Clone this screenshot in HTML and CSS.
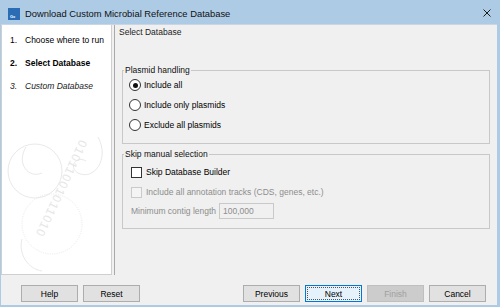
FILE: index.html
```html
<!DOCTYPE html>
<html lang="en">
<head>
    <meta charset="UTF-8">
    <meta name="viewport" content="width=device-width, initial-scale=1.0">
    <title>Download Custom Microbial Reference Database</title>
    <link rel="stylesheet" href="styles.css">
</head>
<body>
<div class="window">
    <div class="titlebar">
        <div class="appicon"><span>Gx</span></div>
        <div class="title">Download Custom Microbial Reference Database</div>
        <div class="close">
            <svg width="8" height="8" viewBox="0 0 8 8"><path d="M0.5 0.5 L7.5 7.5 M7.5 0.5 L0.5 7.5" stroke="#1b1b1b" stroke-width="1"/></svg>
        </div>
    </div>
    <div class="frame">
        <div class="main">
            <div class="side">
                <svg class="mark" width="108" height="145" viewBox="0 0 108 145">
                    <g fill="none" stroke="#e9e9e9" stroke-width="1">
                        <circle cx="33" cy="42" r="27"/>
                        <circle cx="50" cy="95" r="30" stroke-dasharray="1 1.3"/>
                        <path d="M96 8 C 108 30 92 52 76 44 C 66 38 74 26 84 32"/>
                        <path d="M24 18 C 14 34 26 50 40 44"/>
                        <path d="M20 110 C 16 125 26 140 40 142"/>
                    </g>
                    <text class="bits" transform="translate(78 10) rotate(115)">01011001011010</text>
                </svg>
                <div class="step"><span class="num">1.</span>Choose where to run</div>
                <div class="step current"><span class="num">2.</span>Select Database</div>
                <div class="step next"><span class="num">3.</span>Custom Database</div>
            </div>
            <div class="content">
                <div class="heading">Select Database</div>
                <div class="group first">
                    <div class="legend">Plasmid handling</div>
                    <label class="opt"><span class="radio on"></span>Include all</label>
                    <label class="opt"><span class="radio"></span>Include only plasmids</label>
                    <label class="opt"><span class="radio"></span>Exclude all plasmids</label>
                </div>
                <div class="group second">
                    <div class="legend">Skip manual selection</div>
                    <label class="opt"><span class="box"></span>Skip Database Builder</label>
                    <label class="opt off"><span class="box"></span>Include all annotation tracks (CDS, genes, etc.)</label>
                    <div class="field off">Minimum contig length<span class="input">100,000</span></div>
                </div>
            </div>
        </div>
        <div class="footer">
            <div class="btns">
                <button class="btn">Help</button>
                <button class="btn">Reset</button>
            </div>
            <div class="btns">
                <button class="btn">Previous</button>
                <button class="btn focus">Next</button>
                <button class="btn" disabled>Finish</button>
                <button class="btn">Cancel</button>
            </div>
        </div>
    </div>
</div>
</body>
</html>
```

FILE: styles.css
```css
body{
    margin: 0;
    font-family: "Liberation Sans", Arial, sans-serif;
    font-size: 8.5px;
    color: #000;
}

.window{
    width: 500px;
    height: 307px;
    background-color: #aecbe6;
    display: flex;
    flex-direction: column;
    box-sizing: border-box;
    padding: 0 3px 2px 1px;
}

.titlebar{
    height: 24px;
    display: flex;
    align-items: center;
    padding: 3px 0 0 7px;
    box-sizing: border-box;
}
.appicon{
    width: 12px;
    height: 12px;
    background-color: #2b6db5;
    position: relative;
}
.appicon span{
    position: absolute;
    left: 2px;
    bottom: 1px;
    font-size: 4px;
    color: #fff;
    font-weight: bold;
}
.title{
    margin-left: 5px;
    font-size: 9.4px;
    color: #111;
    flex: 1;
}
.close{
    width: 8px;
    height: 8px;
    margin: 0 6px 2px 0;
    display: flex;
}

.frame{
    flex: 1;
    background-color: #f0f0f0;
    display: flex;
    flex-direction: column;
    border-top: 1px solid #c9d6e3;
}

.main{
    height: 250px;
    display: flex;
}

.side{
    width: 111px;
    background-color: #fff;
    border: 1px solid #cfcfcf;
    border-top: none;
    position: relative;
    overflow: hidden;
    padding-top: 10px;
    box-sizing: border-box;
}
.mark{
    position: absolute;
    left: 0;
    bottom: 0;
}
.bits{
    font-size: 12px;
    fill: #e6e6e6;
    letter-spacing: 1px;
}
.step{
    position: relative;
    height: 23px;
    line-height: 11px;
    padding-left: 8px;
    white-space: nowrap;
}
.step .num{
    display: inline-block;
    width: 15px;
}
.current{
    font-weight: bold;
}
.next{
    font-style: italic;
    color: #222;
}

.content{
    flex: 1;
    margin-left: 2px;
    border-left: 1px solid #a9a9a9;
    padding: 2px 7px 0 7px;
}
.heading{
    height: 43px;
    line-height: 11px;
    margin-left: -3px;
    box-sizing: border-box;
    color: #222;
}

.group{
    border: 1px solid #c8c8c8;
    padding: 0 6px;
}
.group.first{
    padding-bottom: 8px;
}
.group.second{
    margin-top: 10px;
    padding-bottom: 9px;
}
.legend{
    display: table;
    height: 11px;
    line-height: 11px;
    margin: -6px 0 0 -5px;
    padding: 0 1px;
    background-color: #f0f0f0;
    color: #111;
}
.first .legend{
    margin-bottom: -1px;
}
.second .legend{
    margin-bottom: 2px;
}

.opt{
    display: flex;
    align-items: center;
    height: 20px;
}
.radio{
    width: 10px;
    height: 10px;
    border: 1px solid #333;
    border-radius: 50%;
    background-color: #fff;
    margin-right: 3px;
    position: relative;
}
.radio.on::after{
    content: "";
    position: absolute;
    left: 2.5px;
    top: 2.5px;
    width: 5px;
    height: 5px;
    border-radius: 50%;
    background-color: #111;
}
.box{
    width: 9px;
    height: 9px;
    border: 1px solid #333;
    background-color: #fff;
    margin: 0 4px 0 2px;
}
.off{
    color: #8d8d8d;
}
.off .box{
    border-color: #cacaca;
    background-color: #f4f4f4;
}
.field{
    display: flex;
    align-items: center;
    height: 17px;
    padding-left: 2px;
}
.input{
    margin-left: 3px;
    width: 50px;
    height: 14px;
    line-height: 14px;
    border: 1px solid #c9c9c9;
    padding-left: 3px;
    color: #8d8d8d;
}

.footer{
    flex: 1;
    display: flex;
    justify-content: space-between;
    align-items: flex-start;
    padding: 10px 11px 0 20px;
}
.btns{
    display: flex;
    gap: 5px;
}
.btn{
    width: 57px;
    height: 17px;
    padding: 0;
    font-family: inherit;
    font-size: 8.5px;
    color: #000;
    background-color: #e1e1e1;
    border: 1px solid #adadad;
}
.btn.focus{
    background-color: #e5f1fb;
    border-color: #0078d7;
    outline: 1px dotted #555;
    outline-offset: -3px;
}
.btn[disabled]{
    color: #a0a0a0;
    background-color: #cccccc;
    border-color: #bfbfbf;
}
```
